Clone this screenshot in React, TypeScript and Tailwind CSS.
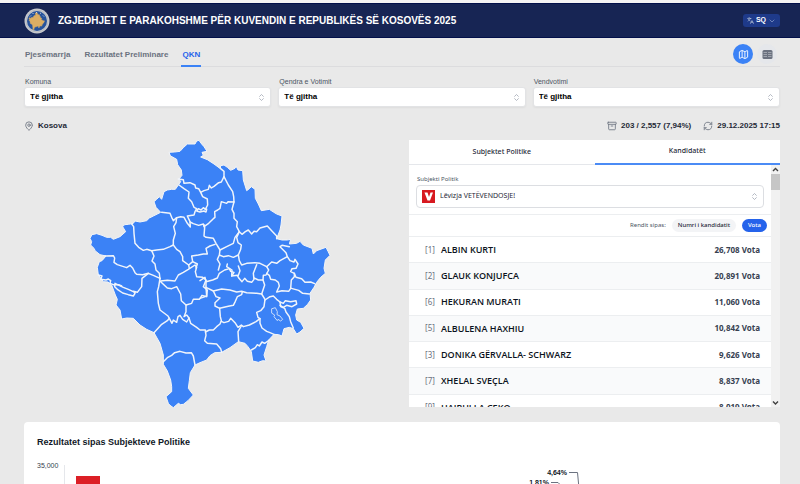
import { type ReactNode, useState } from 'react';
import {
  Archive,
  ChevronDown,
  ChevronsUpDown,
  Languages,
  Map as MapIcon,
  MapPin,
  RefreshCw,
} from 'lucide-react';

interface Candidate {
  number: number;
  name: string;
  votes: number;
}

const TABS = ['Pjesëmarrja', 'Rezultatet Preliminare', 'QKN'];

const FILTERS = [
  { id: 'komuna', label: 'Komuna' },
  { id: 'qendra', label: 'Qendra e Votimit' },
  { id: 'vendvotimi', label: 'Vendvotimi' },
];

const CANDIDATES: Candidate[] = [
  { number: 1, name: 'ALBIN KURTI', votes: 26708 },
  { number: 2, name: 'GLAUK KONJUFCA', votes: 20891 },
  { number: 6, name: 'HEKURAN MURATI', votes: 11060 },
  { number: 5, name: 'ALBULENA HAXHIU', votes: 10842 },
  { number: 3, name: 'DONIKA GËRVALLA- SCHWARZ', votes: 9626 },
  { number: 7, name: 'XHELAL SVEÇLA', votes: 8837 },
  { number: 9, name: 'HAJRULLA CEKO', votes: 8019 },
];

const OUTLINE =
  'M268 67L284 66L300 64L310 53L322 42L345 42L350 33L357 31L365 42L372 50L381 64L366 67L370 76L362 81L382 89L402 102L421 116L422 107L432 105L442 112L452 121L465 115L468 108L474 120L488 122L490 150L500 182L508 176L514 170L525 178L526 205L535 222L544 242L568 238L580 246L590 252L606 258L603 285L600 300L590 326L606 330L622 330L632 328L628 342L650 340L660 334L670 345L696 355L700 372L710 362L738 352L744 364L750 376L736 390L732 415L736 430L722 442L710 457L702 472L690 490L692 510L682 524L670 535L652 537L647 555L650 570L662 577L672 595L660 606L650 612L640 596L628 592L612 596L606 618L596 614L582 613L566 630L560 650L552 675L558 693L548 692L535 697L518 693L514 665L504 650L495 640L475 635L450 653L425 667L404 668L390 677L380 690L360 698L345 705L331 728L328 752L325 775L340 795L324 812L310 823L302 824L295 820L280 833L270 826L265 820L258 800L275 785L275 770L272 750L262 723L250 703L250 675L240 640L222 608L200 598L180 585L160 565L140 564L125 567L120 540L108 525L112 508L106 495L95 465L84 456L70 455L55 435L52 412L58 395L66 392L78 378L60 374L45 362L43 356L32 345L35 335L30 325L36 314L50 311L66 316L80 322L92 322L100 328L120 320L137 305L128 290L134 284L146 283L160 280L165 273L180 276L200 272L208 264L220 258L242 247L228 232L222 215L230 208L238 200L245 208L252 185L262 180L275 178L286 178L295 165L302 155L297 147L306 136L304 120L293 104L290 88L272 78Z';

// municipality borders
const BORDERS = [
  'M295 147L310 149L312 160L330 158L345 165L347 174L356 176L362 187L372 182L385 178L388 166L394 174L402 169L416 158L424 156L432 140L432 124L422 116',
  'M297 165L312 176L327 186L325 205L335 215L342 232L350 236L345 245L342 255L322 258L330 275L331 291L322 280L312 262L302 260L290 263L280 272L275 262L270 250L245 247',
  'M362 187L368 200L382 207L383 225L376 238L370 233L363 240L355 236L350 243L360 246L372 243L378 246L380 238',
  'M290 263L288 278L281 290L286 310L280 330L280 345L270 350L250 358L230 360L215 362L200 358L190 361L176 352L165 340L162 310L161 290L155 282',
  'M330 276L340 281L356 286L370 282L372 290L386 280L400 266L405 262L404 245L413 240L420 235L424 215L440 220L444 215L462 216L461 200L458 185L445 165L432 140',
  'M372 284L374 292L372 318L378 322L400 325L408 340L420 360L440 350L460 340L465 322L478 305L470 290L472 275L462 265L462 250L456 238L462 216',
  'M280 345L290 358L300 365L308 380L308 392L326 405L338 395L335 378L355 375L370 372L382 372L378 355L390 348L405 343',
  'M215 362L222 378L216 393L225 402L228 420L238 430L240 447',
  'M75 378L100 377L104 384L102 397L112 404L140 413L150 406L158 414L165 428L170 433L188 434L205 430L220 436L240 445',
  'M205 430L186 445L185 470L172 487L160 484L165 490L160 498L145 494L128 489L112 478L104 470L105 460L130 472L145 478L160 485',
  'M55 435L66 438L62 448L78 450L85 447L92 452L90 460L100 464L116 464L125 468',
  'M240 445L236 470L232 485L235 520L240 540L264 558L268 565L262 572L245 583L222 608',
  'M242 453L262 451L285 453L295 435L310 427L325 418L345 405L350 412L346 425L350 440L368 442L378 450L370 470L382 480L380 500L366 496L358 508L340 508L335 520L318 525L304 512L302 492L290 470L275 476L262 474L242 455',
  'M326 405L328 415M338 395L352 402L348 414',
  'M318 525L318 545L312 560L320 555L327 564L320 576L308 568L300 556L294 560L290 577L280 570L276 580L268 565',
  'M327 564L332 580L350 592L360 600L376 600L378 616L374 632L382 640L410 642L422 656L425 667',
  'M250 695L262 683L275 676L284 668L300 664L318 669L334 668L340 678L345 705',
  'M376 606L388 600L400 600L410 590L420 582L424 572L421 560L419 535',
  'M478 305L486 313L496 305L505 300L515 312L522 304L530 305L540 294L562 288L575 302L590 318L590 326',
  'M478 305L470 322L474 338L484 345L482 358L475 375L478 392L485 405L500 400L525 398L540 400L560 410L575 396L590 400L600 392L622 380L618 368L600 350L606 346L628 350',
  'M420 360L418 375L430 380L445 377L460 382L475 375M418 375L412 388L420 402L415 420',
  'M622 380L630 392L642 396L645 388L654 402L648 415L636 416L632 425L643 430L648 442L665 446L675 457L692 456L704 461',
  'M360 452L375 442L378 455L398 450L412 444L418 430L434 420L448 416L452 424L462 427L455 438L472 436L477 445L486 455L494 445L502 454L515 457L522 448L520 430L530 404',
  'M455 438L456 420L440 410L442 402M475 436L480 422L475 408M560 410L566 420L558 435L550 436L549 450L535 450L522 444',
  'M560 430L568 436L572 448L586 450L595 457L598 468L590 486L606 482L626 484L632 475L634 450L643 440L643 430',
  'M549 450L554 465L545 492L530 490L500 488L485 484L470 486L450 480L425 477L400 483L378 472L378 452',
  'M378 472L380 498L360 505M400 483L408 500L420 504L405 518L405 528L419 535L445 529L460 526L466 514L472 500L485 494L487 485',
  'M545 492L555 508L552 530L542 542L530 547L534 562L540 566L528 575L508 585L490 590L484 585L474 592L465 578L452 565L446 574L432 578L424 574',
  'M484 588L474 605L476 635M540 566L540 580L546 594L560 604L570 608L582 613',
  'M555 510L570 500L580 498L590 508L600 516L602 530L614 535L618 546L628 560L632 575L640 594',
  'M600 516L610 520L616 512L632 515L648 512L650 522L636 530L620 526L610 532L600 526M634 475L656 481L668 490L688 492',
  'M514 660L526 653L532 644L538 648L546 636L554 640L568 630',
];

const ENCLAVE =
  'M576 536L586 533L592 545L591 554L600 558L608 568L602 573L594 568L592 572L582 560L584 555L576 550Z';

const formatVotes = (votes: number) => `${votes.toLocaleString('en-US')} Vota`;

export default function App() {
  return (
    <div className="h-screen overflow-hidden bg-[#e9e9e9] font-['Liberation_Sans',Arial,sans-serif] text-[#1f2937]">
      <Header />
      <main className="pr-5 pl-6">
        <Navigation />
        <Filters />
        <StatusBar />
        <div className="grid grid-cols-2 gap-[14px]">
          <div className="flex justify-center">
            <KosovoMap />
          </div>
          <CandidatesPanel />
        </div>
        <ResultsCard />
      </main>
    </div>
  );
}

function Header() {
  return (
    <header className="border-t-[3px] border-[#f4f4f4]">
      <div className="flex h-[35px] items-center justify-between border-y border-[#02104a] bg-[#172554] pr-5 pl-6">
        <div className="flex items-center gap-2">
          <Emblem />
          <h1 className="text-[10px] leading-4 font-bold text-white">
            ZGJEDHJET E PARAKOHSHME PËR KUVENDIN E REPUBLIKËS SË KOSOVËS 2025
          </h1>
        </div>
        <button
          type="button"
          className="flex h-[13px] w-[37px] items-center justify-center gap-[2px] rounded-[3px] bg-[#1e3a8a] text-[7px] font-bold text-white"
        >
          <Languages className="size-[7px] text-[#cbd5e1]" />
          SQ
          <ChevronDown className="size-[8px] text-[#93a4d0]" />
        </button>
      </div>
    </header>
  );
}

function Emblem() {
  return (
    <svg className="size-[26px]" viewBox="0 0 52 52" aria-hidden="true">
      <circle cx="26" cy="26" r="25" fill="#c9cbd0" />
      <circle cx="26" cy="26" r="22" fill="none" stroke="#a9abad" strokeWidth="1" />
      <circle cx="26" cy="26" r="20" fill="#26539c" />
      <g transform="translate(8 8) rotate(8 18 18) scale(0.044)">
        <path d={OUTLINE} fill="#dcae63" stroke="#dcae63" strokeWidth="20" />
      </g>
      <path
        d="M12 17l2-2M17 12l2-2M24 9h2M32 10l2 1M38 15l2 2"
        stroke="#e8e8e8"
        strokeWidth="1.6"
      />
    </svg>
  );
}

function Navigation() {
  const [active, setActive] = useState('QKN');

  return (
    <nav className="flex h-[29px] items-stretch justify-between border-b border-[#dcdcde]">
      <div className="flex gap-3">
        {TABS.map((tab) => (
          <button
            key={tab}
            type="button"
            onClick={() => setActive(tab)}
            className={`-mb-px border-b-2 px-px pt-[6px] text-[8px] font-bold ${
              tab === active
                ? 'border-[#3b82f6] text-[#2563eb]'
                : 'border-transparent text-[#6b7280]'
            }`}
          >
            {tab}
          </button>
        ))}
      </div>
      <div className="flex items-center gap-1 pt-1 pr-[3px]">
        <button
          type="button"
          aria-label="Harta"
          className="flex size-5 items-center justify-center rounded-full bg-[#3b82f6] text-white"
        >
          <MapIcon className="size-[11px]" />
        </button>
        <button
          type="button"
          aria-label="Tabela"
          className="flex size-5 items-center justify-center rounded-full bg-[#e5e7eb]"
        >
          <svg className="size-[11px]" viewBox="0 0 22 22" aria-hidden="true">
            <rect x="1" y="2" width="20" height="18" rx="3" fill="#6b7280" />
            <path d="M3 7h7M12 7h7M3 11h7M12 11h7M3 15h7M12 15h7" stroke="#b6bac2" strokeWidth="1.4" />
          </svg>
        </button>
      </div>
    </nav>
  );
}

function Filters() {
  return (
    <div className="grid grid-cols-3 gap-[7px] pt-[9px]">
      {FILTERS.map((filter) => (
        <div key={filter.id} className="flex flex-col">
          <label
            htmlFor={filter.id}
            className="pl-px text-[7px] leading-[11px] font-medium text-[#4b5563]"
          >
            {filter.label}
          </label>
          <SelectShell>
            <select
              id={filter.id}
              className="h-5 w-full appearance-none rounded-[3px] border border-[#e2e3e5] bg-white px-[5px] text-[8px] font-bold text-black shadow-xs"
            >
              <option>Të gjitha</option>
            </select>
          </SelectShell>
        </div>
      ))}
    </div>
  );
}

function SelectShell({ children }: { children: ReactNode }) {
  return (
    <div className="relative flex items-center">
      {children}
      <ChevronsUpDown className="pointer-events-none absolute right-[5px] size-[9px] text-[#9ca3af]" />
    </div>
  );
}

function StatusBar() {
  return (
    <div className="flex h-[33px] items-center justify-between pt-1 text-[8px] font-bold">
      <span className="flex items-center gap-1">
        <MapPin className="size-[10px] text-[#6b7280]" />
        Kosova
      </span>
      <div className="flex items-center gap-3">
        <span className="flex items-center gap-1">
          <Archive className="size-[10px] text-[#6b7280]" />
          203 / 2,557 (7,94%)
        </span>
        <span className="flex items-center gap-1">
          <RefreshCw className="size-[10px] text-[#6b7280]" />
          29.12.2025 17:15
        </span>
      </div>
    </div>
  );
}

function KosovoMap() {
  return (
    <svg
      className="h-[268px] w-[260px]"
      viewBox="0 30 780 804"
      role="img"
      aria-label="Kosova"
      strokeLinejoin="round"
      strokeLinecap="round"
    >
      <path d={OUTLINE} fill="#3b82f6" stroke="#f3f5f8" strokeWidth="3" />
      <g fill="none" stroke="#f1f5fb" strokeWidth="4.4">
        {BORDERS.map((border) => (
          <path key={border} d={border} />
        ))}
      </g>
      <path d={ENCLAVE} fill="none" stroke="#c9dcfb" strokeWidth="3" />
    </svg>
  );
}

function CandidatesPanel() {
  const [sort, setSort] = useState<'number' | 'votes'>('votes');
  const rows =
    sort === 'votes' ? CANDIDATES : [...CANDIDATES].sort((a, b) => a.number - b.number);

  return (
    <section className="flex h-[267px] flex-col overflow-hidden bg-white font-['Noto_Sans',sans-serif]">
      <div className="grid h-[25px] shrink-0 grid-cols-2 text-[7px] font-medium">
        <button type="button" className="border-b border-[#e5e7eb]">
          Subjektet Politike
        </button>
        <button type="button" className="border-b-2 border-[#4b8bf5]">
          Kandidatët
        </button>
      </div>
      <div className="flex min-h-0 flex-1">
        <div className="min-w-0 flex-1 overflow-hidden">
          <div className="px-[7px] pt-[9px] pb-[6px]">
            <label htmlFor="subjekti" className="block pl-px text-[6px] leading-[11px] text-[#4b5563]">
              Subjekti Politik
            </label>
            <SelectShell>
              <select
                id="subjekti"
                className="h-[23px] w-full appearance-none rounded-[4px] border border-[#dcdee2] bg-white pl-[23px] text-[7px] text-[#1f2937]"
              >
                <option>Lëvizja VETËVENDOSJE!</option>
              </select>
              <PartyLogo />
            </SelectShell>
          </div>
          <div className="flex h-[22px] items-center justify-end gap-[6px] border-t border-[#eceef0] pr-1 text-[6px]">
            <span className="text-[#4b5563]">Rendit sipas:</span>
            <SortButton active={sort === 'number'} onClick={() => setSort('number')}>
              Numri i kandidatit
            </SortButton>
            <SortButton active={sort === 'votes'} onClick={() => setSort('votes')}>
              Vota
            </SortButton>
          </div>
          <ol className="grid h-[184px] auto-rows-fr">
            {rows.map((candidate) => (
              <li
                key={candidate.number}
                className="flex items-center border-t border-[#eceef0] pr-[11px] pl-4 text-[8px] font-bold odd:bg-white even:bg-[#f9fafb]"
              >
                <span className="w-4 font-normal text-[#6b7280]">[{candidate.number}]</span>
                <span className="flex-1 font-['Open_Sans','Noto_Sans',sans-serif] text-[9px] font-semibold text-[#0b1220]">
                  {candidate.name}
                </span>
                <span className="text-[#374151]">{formatVotes(candidate.votes)}</span>
              </li>
            ))}
          </ol>
        </div>
        <div className="flex w-[9px] flex-col items-center justify-between bg-[#f1f1f1] py-[2px]">
          <div className="flex w-full flex-col items-center gap-[2px]">
            <ScrollArrow d="M1 4l2.5-2.5L6 4" />
            <div className="h-4 w-full bg-[#c6c6c6]" />
          </div>
          <ScrollArrow d="M1 1.5L3.5 4 6 1.5" />
        </div>
      </div>
    </section>
  );
}

interface SortButtonProps {
  active: boolean;
  onClick: () => void;
  children: ReactNode;
}

function SortButton({ active, onClick, children }: SortButtonProps) {
  return (
    <button
      type="button"
      onClick={onClick}
      className={`h-[13px] rounded-full px-[6px] font-medium ${
        active ? 'bg-[#2563eb] text-white' : 'bg-[#f3f4f6] text-[#1f2937]'
      }`}
    >
      {children}
    </button>
  );
}

function ScrollArrow({ d }: { d: string }) {
  return (
    <svg className="h-[5px] w-[7px]" viewBox="0 0 7 5" aria-hidden="true">
      <path d={d} fill="none" stroke="#404040" strokeWidth="1.4" />
    </svg>
  );
}

function PartyLogo() {
  return (
    <svg
      className="pointer-events-none absolute left-[6px] size-[13px]"
      viewBox="0 0 26 26"
      aria-hidden="true"
    >
      <rect width="26" height="26" fill="#d71920" />
      <path d="M5 5h6l3 9 3-9h5l-6 16h-5z" fill="#fff" />
    </svg>
  );
}

function ResultsCard() {
  return (
    <section className="mt-[14px] rounded-[4px] bg-white px-[13px] pt-[13px]">
      <h2 className="text-[9px] leading-[14px] font-bold text-[#111827]">
        Rezultatet sipas Subjekteve Politike
      </h2>
      <div className="grid grid-cols-2 pt-3">
        <div className="flex gap-[6px]">
          <span className="text-[7px] leading-[9px] text-[#374151]">35,000</span>
          <div className="mt-1 flex h-40 flex-1 items-end border-l border-[#e5e7eb] pl-[11px]">
            <div className="h-[149px] w-6 bg-[#dc1f26]" />
          </div>
        </div>
        <svg
          className="h-40 w-full"
          viewBox="0 0 365 160"
          preserveAspectRatio="xMinYMin meet"
          role="img"
          aria-label="Rezultatet"
          fontSize="7"
          fontWeight="bold"
          fill="#111827"
        >
          <text x="165" y="14" textAnchor="end">
            4,64%
          </text>
          <text x="147" y="24" textAnchor="end">
            1,81%
          </text>
          <path
            d="M167 11.500h8.500l1.500 16M149 21.500h7l3 3"
            fill="none"
            stroke="#6b7280"
            strokeWidth="1"
          />
        </svg>
      </div>
    </section>
  );
}
